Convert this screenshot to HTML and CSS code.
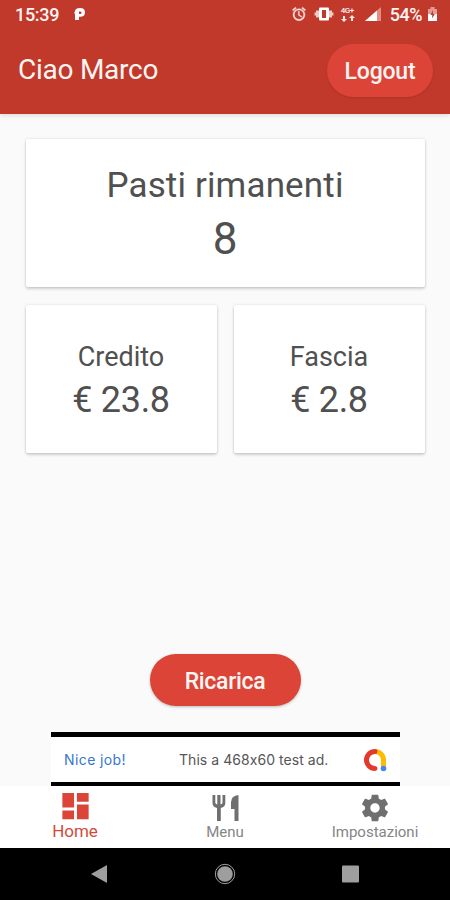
FILE: index.html
```html
<!DOCTYPE html>
<html lang="it">
<head>
   <meta charset="UTF-8" />
   <meta name="viewport" content="width=device-width, initial-scale=1.0"/>
   <title>Home</title>
   <link rel="stylesheet" href="styles.css">
</head>
<body>

   <header class="header">
      <div class="status-bar">
         <span class="time">15:39</span>
         <svg class="icon-p" width="14" height="14" viewBox="0 0 14 14">
            <path fill="#fff" fill-rule="evenodd" d="M2 4Q2.500 1 7 1 12 1 12 5.300 12 9.800 7 9.800H6V13H2V6.500H1zM6 4.500V7h1.300Q8.500 7 8.500 5.700 8.500 4.500 7.300 4.500z"/>
         </svg>
         <div class="status-icons">
            <svg width="16" height="16" viewBox="0 0 24 24">
               <path fill="#fbe3df" stroke="#fbe3df" stroke-width=".6" d="M22 5.700l-4.600-3.900-1.300 1.500 4.600 3.900L22 5.700zM7.900 3.400L6.600 1.900 2 5.700l1.300 1.500 4.600-3.800zM12.500 8H11v6l4.700 2.900.8-1.200-4-2.400V8zM12 4a9 9 0 1 0 0 18 9 9 0 0 0 0-18zm0 16a7 7 0 1 1 0-14 7 7 0 0 1 0 14z"/>
            </svg>
            <svg class="vibrate" width="20" height="16" viewBox="0 0 20 16">
               <path fill="#f4c9c2" d="M2 4.500h3v7H2zM15 4.500h3v7h-3zM.5 6.500H2v3H.5zM18 6.500h1.500v3H18z"/>
               <path fill="#fff" d="M6 1.500h8q1 0 1 1v11q0 1-1 1H6q-1 0-1-1v-11q0-1 1-1z"/>
               <path fill="#c0392b" d="M8 4h4v8H8z"/>
            </svg>
            <div class="network">
               <span>4G+</span>
               <svg width="14" height="7" viewBox="0 0 14 7">
                  <path fill="#fbe3df" d="M3 7L0 4h2V1h2v3h2zM11 0l3 3h-2v3h-2V3H8z"/>
               </svg>
            </div>
            <svg class="signal" width="16" height="14" viewBox="0 0 16 14">
               <path fill="#e08d82" d="M0 14L16 0v14z"/>
               <path fill="#fff" d="M0 14L12 3.500V14z"/>
            </svg>
            <span class="percent">54%</span>
            <svg class="battery" width="9" height="14" viewBox="0 0 9 14">
               <path fill="#e39a91" d="M0 2h2.500V0h4v2H9v5H0z"/>
               <path fill="#fff" d="M0 7h9v7H0z"/>
               <path fill="#c0392b" d="M5 3L2.500 8h1.700v3.500L6.800 7H5z"/>
            </svg>
         </div>
      </div>
      <div class="toolbar">
         <h1>Ciao Marco</h1>
         <button class="btn logout">Logout</button>
      </div>
   </header>

   <main class="content">
      <div class="cards">
         <div class="card wide">
            <p class="card-title">Pasti rimanenti</p>
            <p class="card-value">8</p>
         </div>
         <div class="card">
            <p class="card-title">Credito</p>
            <p class="card-value">€ 23.8</p>
         </div>
         <div class="card">
            <p class="card-title">Fascia</p>
            <p class="card-value">€ 2.8</p>
         </div>
      </div>
      <button class="btn ricarica">Ricarica</button>
      <div class="ad">
         <span class="ad-link">Nice job!</span>
         <span class="ad-text">This a 468x60 test ad.</span>
         <svg width="24" height="24" viewBox="0 0 24 24" fill="none" stroke-width="5">
            <path stroke="#fbbc04" d="M12 3.500A8.500 8.500 0 0 1 20.500 12v8"/>
            <path stroke="#e23b2e" stroke-linecap="round" d="M12 3.500A8.500 8.500 0 1 0 12 20.500"/>
            <circle cx="20.500" cy="20.500" r="2.800" fill="#4285f4"/>
         </svg>
      </div>
   </main>

   <nav class="tabs">
      <a class="tab active">
         <svg width="35" height="35" viewBox="0 0 24 24">
            <path d="M3 13h8V3H3v10zm0 8h8v-6H3v6zm10 0h8V11h-8v10zm0-18v6h8V3h-8z"/>
         </svg>
         <span>Home</span>
      </a>
      <a class="tab">
         <svg width="36" height="36" viewBox="0 0 36 36">
            <path d="M5.500 5h2.800v7.500q0 1.500 2 2V5h3.200v9.500q2-.5 2-2V5h2.800v8q0 4-4.500 5v13h-3.800V18q-4.500-1-4.500-5z"/>
            <path d="M31.500 5v26h-4V19H24v-6.500q0-7 7.500-7.500z"/>
         </svg>
         <span>Menu</span>
      </a>
      <a class="tab">
         <svg width="32" height="32" viewBox="0 0 24 24">
            <path d="M19.430 12.980c.04-.32.07-.64.07-.98s-.03-.66-.07-.98l2.110-1.650c.19-.15.24-.42.12-.64l-2-3.460c-.12-.22-.39-.3-.61-.22l-2.490 1c-.52-.4-1.080-.73-1.690-.98l-.38-2.650C14.460 2.180 14.250 2 14 2h-4c-.25 0-.46.18-.49.42l-.38 2.650c-.61.25-1.170.59-1.690.98l-2.490-1c-.23-.09-.49 0-.61.22l-2 3.460c-.13.22-.07.49.12.64l2.110 1.650c-.04.32-.07.65-.07.98s.03.66.07.98l-2.110 1.650c-.19.15-.24.42-.12.64l2 3.460c.12.22.39.3.61.22l2.490-1c.52.4 1.080.73 1.690.98l.38 2.650c.03.24.24.42.49.42h4c.25 0 .46-.18.49-.42l.38-2.650c.61-.25 1.170-.59 1.690-.98l2.490 1c.23.09.49 0 .61-.22l2-3.460c.12-.22.07-.49-.12-.64l-2.110-1.650zM12 15.500c-1.930 0-3.500-1.570-3.500-3.500s1.570-3.500 3.500-3.500 3.500 1.570 3.500 3.500-1.570 3.500-3.500 3.500z"/>
         </svg>
         <span>Impostazioni</span>
      </a>
   </nav>

   <footer class="system-bar">
      <svg width="22" height="22" viewBox="0 0 22 22">
         <path d="M2 11L18 2v18z"/>
      </svg>
      <svg width="22" height="22" viewBox="0 0 22 22">
         <circle cx="11" cy="11" r="7.800"/>
         <circle class="ring" cx="11" cy="11" r="9.700"/>
      </svg>
      <svg width="22" height="22" viewBox="0 0 22 22">
         <rect x="2" y="2.500" width="17" height="17" rx="1"/>
      </svg>
   </footer>

</body>
</html>
```
FILE: styles.css
```css
* {
   margin: 0;
   padding: 0;
   box-sizing: border-box;
}
body {
   display: flex;
   flex-direction: column;
   height: 900px;
   overflow: hidden;
   font-family: Roboto, "Liberation Sans", sans-serif;
   color: #505050;
   background-color: #fafafa;
}
svg {
   display: block;
   flex-shrink: 0;
}
.header {
   height: 114px;
   color: #fff5f2;
   background-color: #c0392b;
   box-shadow: 0 1px 5px rgba(0, 0, 0, 0.15);
}
.status-bar {
   display: flex;
   align-items: center;
   height: 28px;
   padding: 0 13px 0 15px;
   font-size: 18px;
   font-weight: 500;
}
.time {
   letter-spacing: -0.3px;
}
.icon-p {
   margin-left: 14px;
}
.status-icons {
   display: flex;
   align-items: center;
   margin-left: auto;
}
.vibrate {
   margin-left: 7px;
}
.network {
   width: 15px;
   margin-left: 7px;
   font-size: 8px;
   line-height: 8px;
   letter-spacing: -0.5px;
}
.signal {
   margin-left: 9px;
}
.percent {
   margin-left: 9px;
   letter-spacing: -0.5px;
}
.battery {
   margin-left: 6px;
}
.toolbar {
   display: flex;
   align-items: center;
   justify-content: space-between;
   height: 86px;
   padding: 0 17px 2px 18px;
}
.toolbar h1 {
   padding-bottom: 1px;
   font-size: 28px;
   font-weight: 400;
   letter-spacing: -0.25px;
}
.btn {
   border: none;
   color: #fff5f2;
   background-color: #db4437;
   font-family: inherit;
   font-weight: 500;
}
.logout {
   width: 106px;
   height: 53px;
   padding-top: 2px;
   border-radius: 27px;
   font-size: 23px;
   letter-spacing: -0.2px;
   box-shadow: 0 1px 2px rgba(0, 0, 0, 0.1);
}
.content {
   display: flex;
   flex: 1;
   flex-direction: column;
   align-items: center;
   padding-top: 25px;
}
.cards {
   display: grid;
   grid-template-columns: 1fr 1fr;
   grid-auto-rows: 148px;
   gap: 18px 17px;
   width: 399px;
}
.card {
   padding-top: 35px;
   border-radius: 2px;
   text-align: center;
   background-color: #fff;
   box-shadow: 0 2px 3px rgba(0, 0, 0, 0.16), 0 0 3px rgba(0, 0, 0, 0.12);
}
.card-title {
   font-size: 27px;
   line-height: 34px;
}
.card-value {
   font-size: 36px;
   line-height: 52px;
   letter-spacing: -0.3px;
}
.wide {
   grid-column: span 2;
   padding-top: 22px;
}
.wide .card-title {
   font-size: 35px;
   line-height: 50px;
   letter-spacing: 0.15px;
}
.wide .card-value {
   font-size: 44px;
   line-height: 56px;
   letter-spacing: 0;
}
.ricarica {
   width: 151px;
   height: 52px;
   margin-top: auto;
   padding-top: 2px;
   border-radius: 26px;
   font-size: 23px;
   letter-spacing: -0.3px;
   box-shadow: 0 1px 3px rgba(0, 0, 0, 0.25);
}
.ad {
   display: flex;
   align-items: center;
   width: 349px;
   height: 54px;
   margin-top: 26px;
   margin-left: 1px;
   padding: 0 13px;
   border-top: 5px solid #000;
   border-bottom: 4px solid #000;
   font-family: Inter, Roboto, sans-serif;
   font-size: 14px;
   background-color: #fff;
}
.ad-link {
   width: 115px;
   color: #3478cf;
   letter-spacing: 0.4px;
}
.ad-text {
   color: #555;
   letter-spacing: 0.05px;
   font-feature-settings: "calt" 0;
}
.ad svg {
   margin-left: auto;
}
.tabs {
   display: grid;
   grid-template-columns: repeat(3, 1fr);
   height: 62px;
   background-color: #fff;
}
.tab {
   display: flex;
   flex-direction: column;
   align-items: center;
   justify-content: space-between;
   padding: 4px 0 9px;
   color: #858585;
   font-size: 15px;
   line-height: 13px;
}
.tab svg {
   height: 36px;
   fill: #6f6f6f;
}
.tab.active {
   padding: 2px 0 10px;
   color: #d24a3d;
   font-size: 17px;
}
.tab.active svg {
   fill: #db4437;
}
.system-bar {
   display: grid;
   grid-template-columns: repeat(3, 125.5px);
   align-items: center;
   justify-content: center;
   justify-items: center;
   height: 52px;
   background-color: #000;
}
.system-bar svg {
   fill: #9e9e9e;
}
.system-bar .ring {
   fill: none;
   stroke: #9e9e9e;
}
```
